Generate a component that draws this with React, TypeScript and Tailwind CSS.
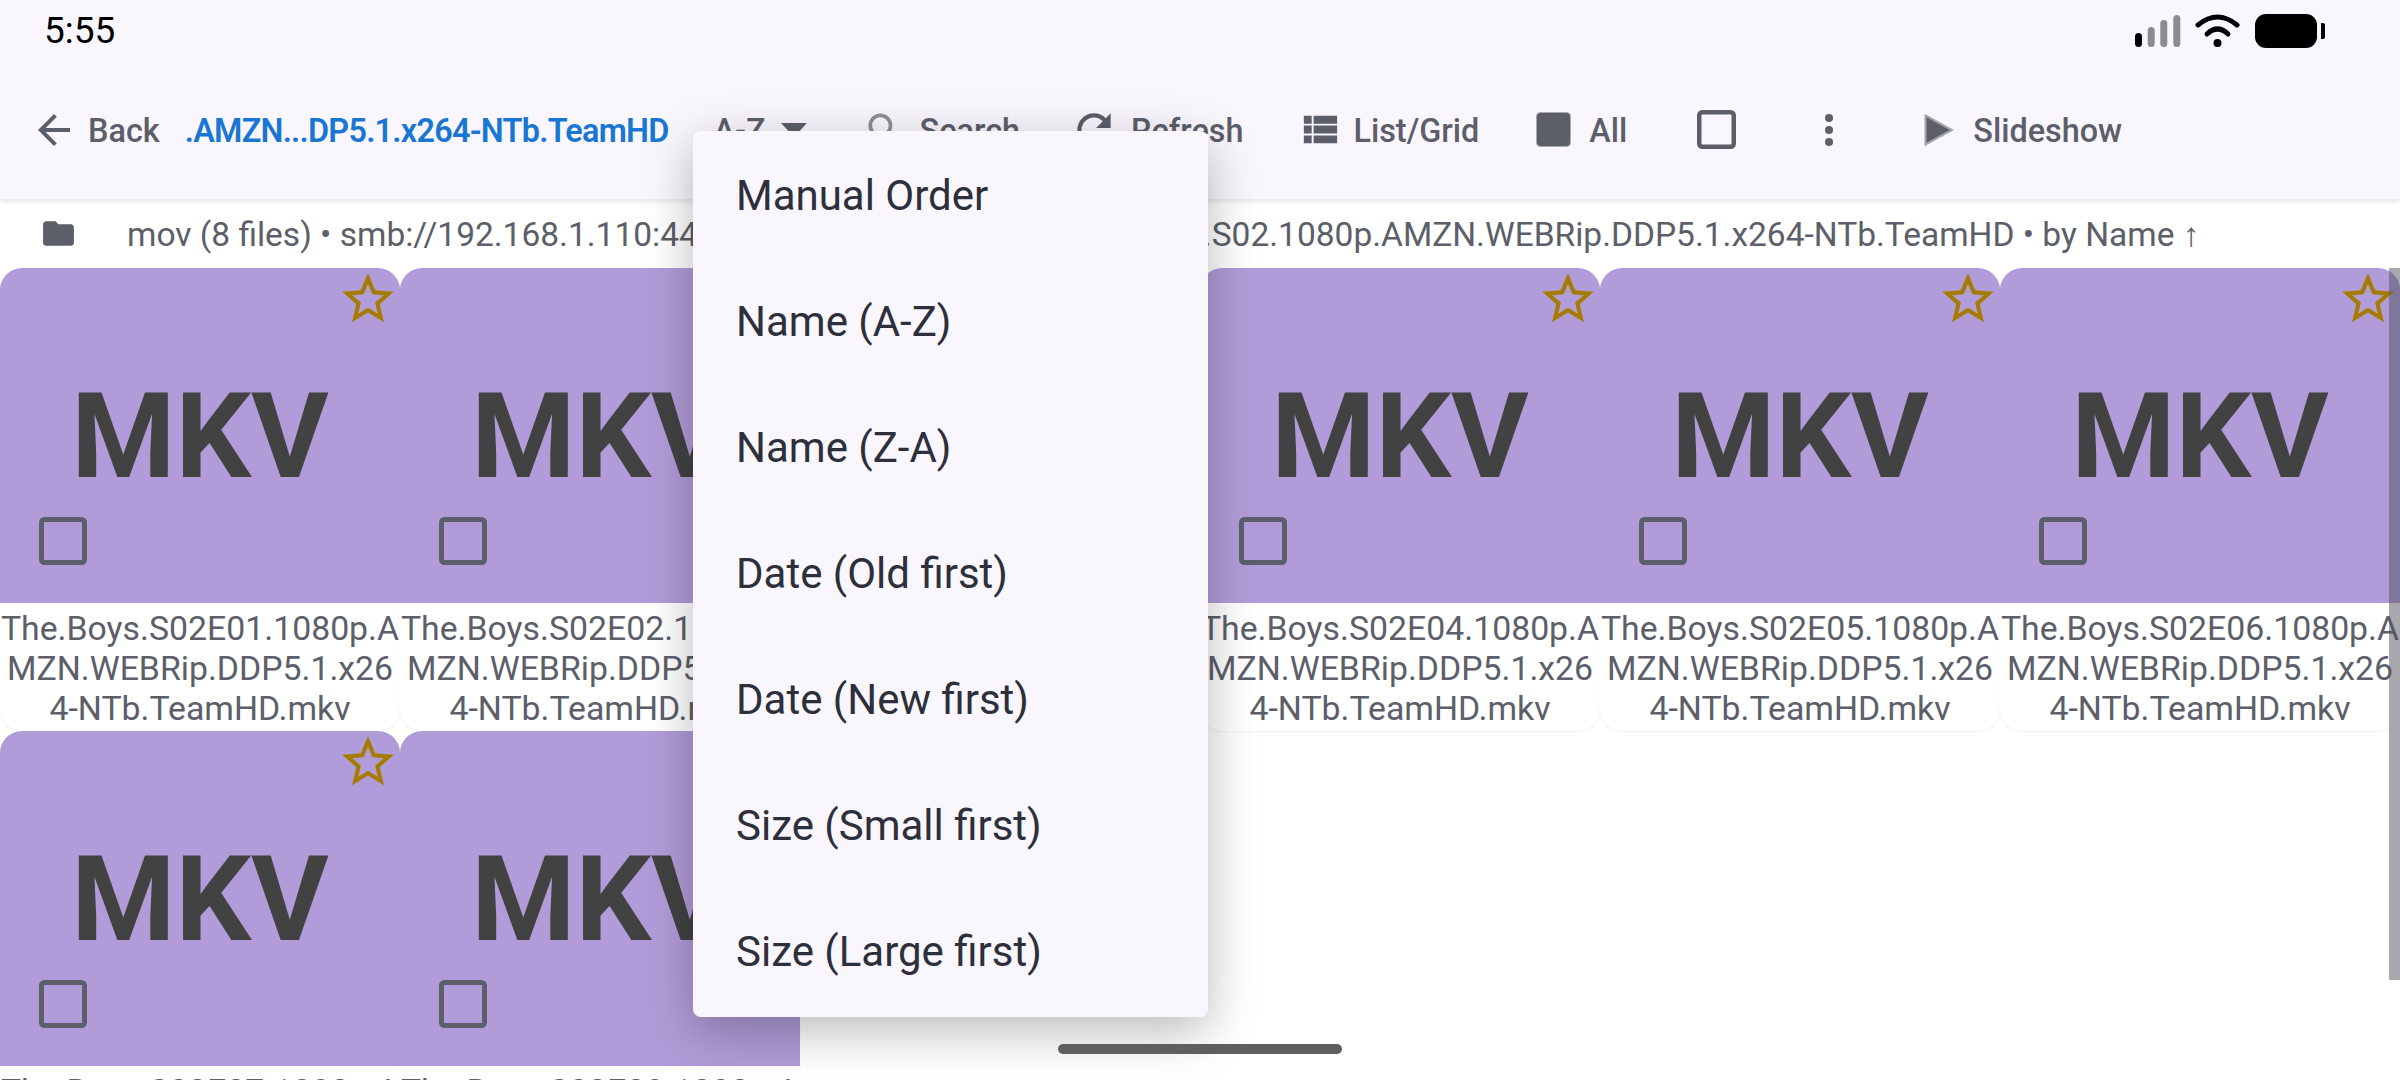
const files = ["E01", "E02", "E03", "E04", "E05", "E06", "E07", "E08"];

const sortItems = [
  "Manual Order",
  "Name (A-Z)",
  "Name (Z-A)",
  "Date (Old first)",
  "Date (New first)",
  "Size (Small first)",
  "Size (Large first)",
];

function FileCard({ ep }: { ep: string }) {
  return (
    <div className="relative h-[463px] overflow-hidden rounded-[22px] bg-white shadow-[0_1px_2px_rgba(0,0,0,0.07)]">
      <div className="flex h-[335px] items-center justify-center bg-[#b19cd9] pt-[2px]">
        <span className="text-[119px] leading-none font-bold text-[#424242]">MKV</span>
      </div>
      <svg className="absolute top-0 right-[1px] h-[62px] w-[62px] fill-[#a67c00]" viewBox="0 0 24 24">
        <path d="M22 9.24l-7.19-.62L12 2 9.19 8.63 2 9.24l5.46 4.73L5.82 21 12 17.27 18.18 21l-1.63-7.03L22 9.24zM12 15.4l-3.76 2.27 1-4.28-3.32-2.88 4.38-.38L12 6.1l1.71 4.04 4.38.38-3.32 2.88 1 4.28L12 15.4z" />
      </svg>
      <svg className="absolute top-[249px] left-[39px] h-[48px] w-[48px] fill-none stroke-[#5c5e69]" viewBox="0 0 48 48" strokeWidth="5">
        <rect x="2.5" y="2.5" width="43" height="43" rx="3" />
      </svg>
      <p className="pt-[6px] text-center text-[33.8px] leading-[40px] break-all text-[#5c5e69]">
        The.Boys.S02{ep}.1080p.AMZN.WEBRip.DDP5.1.x264-NTb.TeamHD.mkv
      </p>
    </div>
  );
}

export default function App() {
  return (
    <div className="relative h-[1080px] w-[2400px] overflow-hidden bg-white font-['Roboto',sans-serif]">
      <div className="relative z-10 bg-[#f9f6fe] shadow-[0_2px_6px_rgba(0,0,0,0.12)]">
        {/* status bar */}
        <div className="flex h-[60px] items-center pr-[75px] pl-[44px]">
          <span className="text-[37px] leading-none text-black">5:55</span>
          <svg className="mt-[2px] ml-auto h-[34px] w-[190px]" viewBox="0 0 190 34">
            <rect x="0" y="19" width="7" height="14" rx="3.5" fill="#000" />
            <rect x="12.7" y="13" width="7" height="20" rx="3.5" fill="#8c8c8c" />
            <rect x="25.3" y="6" width="7" height="27" rx="3.5" fill="#8c8c8c" />
            <rect x="38.3" y="1" width="7" height="32" rx="3.5" fill="#8c8c8c" />
            <path d="M63 11 Q82.5 -5 102 11" fill="none" stroke="#000" strokeWidth="5" strokeLinecap="round" />
            <path d="M72 20 Q82.5 10 93 20" fill="none" stroke="#000" strokeWidth="5" strokeLinecap="round" />
            <circle cx="82.5" cy="29" r="4" fill="#000" />
            <rect x="120" y="0" width="62" height="34" rx="11" fill="#000" />
            <path d="M186 9 L188 9 Q190 9 190 11 L190 23 Q190 25 188 25 L186 25 Z" fill="#000" />
          </svg>
        </div>

        {/* toolbar */}
        <div className="flex h-[139px] items-center pl-[30px] text-[32.4px] font-medium whitespace-nowrap text-[#5c5e69]">
          <svg className="h-[48px] w-[48px] fill-[#5c5e69]" viewBox="0 0 24 24">
            <path d="M20 11H7.83l5.59-5.59L12 4l-8 8 8 8 1.41-1.41L7.83 13H20v-2z" />
          </svg>
          <span className="mt-[4px] ml-[10px]">Back</span>
          <span className="mt-[4px] ml-[25px] font-semibold tracking-[-0.75px] text-[#1976d2]">.AMZN...DP5.1.x264-NTb.TeamHD</span>
          <span className="mt-[4px] ml-[45px]">A-Z</span>
          <svg className="ml-[15px] h-[14px] w-[26px] fill-[#5c5e69]" viewBox="0 0 26 14">
            <path d="M0 0h26L13 14z" />
          </svg>
          <svg className="ml-[56px] h-[44px] w-[44px] fill-[#8f8f95]" viewBox="0 0 24 24">
            <path d="M15.5 14h-.79l-.28-.27C15.41 12.59 16 11.11 16 9.5 16 5.91 13.09 3 9.5 3S3 5.91 3 9.5 5.91 16 9.5 16c1.61 0 3.09-.59 4.23-1.57l.27.28v.79l5 4.99L20.49 19l-4.99-5zm-6 0C7.01 14 5 11.99 5 9.5S7.01 5 9.5 5 14 7.01 14 9.5 11.99 14 9.5 14z" />
          </svg>
          <span className="mt-[4px] ml-[13px]">Search</span>
          <svg className="ml-[49px] h-[50px] w-[50px] fill-[#5c5e69]" viewBox="0 0 24 24">
            <path d="M17.65 6.35C16.2 4.9 14.21 4 12 4c-4.42 0-7.99 3.58-7.99 8s3.57 8 7.99 8c3.73 0 6.84-2.55 7.73-6h-2.08c-.82 2.33-3.04 4-5.65 4-3.31 0-6-2.69-6-6s2.69-6 6-6c1.66 0 3.14.69 4.22 1.78L13 11h7V4l-2.35 2.35z" />
          </svg>
          <span className="mt-[4px] ml-[12px]">Refresh</span>
          <svg className="ml-[53px] h-[47px] w-[47px] fill-[#5c5e69]" viewBox="0 0 24 24">
            <path d="M4 14h4v-4H4v4zm0 5h4v-4H4v4zM4 9h4V5H4v4zm5 5h12v-4H9v4zm0 5h12v-4H9v4zM9 5v4h12V5H9z" />
          </svg>
          <span className="mt-[4px] ml-[10px]">List/Grid</span>
          <svg className="ml-[57px] h-[35px] w-[35px]" viewBox="0 0 35 35">
            <rect x="0.5" y="0.5" width="34" height="34" rx="4" fill="#5c5e69" stroke="#a9aab0" />
          </svg>
          <span className="mt-[4px] ml-[18px]">All</span>
          <svg className="ml-[70px] h-[39px] w-[39px] fill-none stroke-[#5c5e69]" viewBox="0 0 39 39" strokeWidth="4.5">
            <rect x="2.25" y="2.25" width="34.5" height="34.5" rx="3" />
          </svg>
          <svg className="ml-[85px] h-[36px] w-[16px] fill-[#5c5e69]" viewBox="0 0 16 36">
            <circle cx="8" cy="6" r="4" />
            <circle cx="8" cy="18" r="4" />
            <circle cx="8" cy="30" r="4" />
          </svg>
          <svg className="ml-[87px] h-[32px] w-[30px] fill-[#5c5e69] stroke-[#a3a4ab]" viewBox="0 0 30 32" strokeWidth="2">
            <path d="M1.5 1.5 L28 16 L1.5 30.5 Z" />
          </svg>
          <span className="mt-[4px] ml-[19px]">Slideshow</span>
        </div>
      </div>

      {/* path row */}
      <div className="flex h-[69px] items-center pl-[40px] whitespace-nowrap text-[#5c5e69]">
        <svg className="h-[37px] w-[37px] fill-[#5c5e69]" viewBox="0 0 24 24">
          <path d="M10 4H4c-1.1 0-1.99.9-1.99 2L2 18c0 1.1.9 2 2 2h16c1.1 0 2-.9 2-2V8c0-1.1-.9-2-2-2h-8l-2-2z" />
        </svg>
        <span className="mt-[4px] ml-[50px] text-[33.5px]">
          mov (8 files) • smb://192.168.1.110:445/share/serie/The.Boys/The.Boys.S02.1080p.AMZN.WEBRip.DDP5.1.x264-NTb.TeamHD • by Name ↑
        </span>
      </div>

      {/* file grid */}
      <div className="grid grid-cols-6">
        {files.map((ep) => (
          <FileCard key={ep} ep={ep} />
        ))}
      </div>

      {/* scrollbar */}
      <div className="absolute top-[268px] right-0 h-[712px] w-[11px] bg-[#4f505c]/50" />

      {/* sort menu */}
      <div className="absolute top-[131px] left-[693px] z-20 w-[515px] rounded-[8px] bg-[#f9f6fe] py-[2px] shadow-[0_14px_50px_rgba(0,0,0,0.28)]">
        {sortItems.map((item) => (
          <div key={item} className="flex h-[126px] items-center pb-[2px] pl-[43px] text-[42px] text-[#2d2f3a]">
            {item}
          </div>
        ))}
      </div>

      {/* gesture bar */}
      <div className="absolute bottom-[26px] left-1/2 z-30 h-[10px] w-[284px] -translate-x-1/2 rounded-full bg-[#5f5f5f]" />
    </div>
  );
}
